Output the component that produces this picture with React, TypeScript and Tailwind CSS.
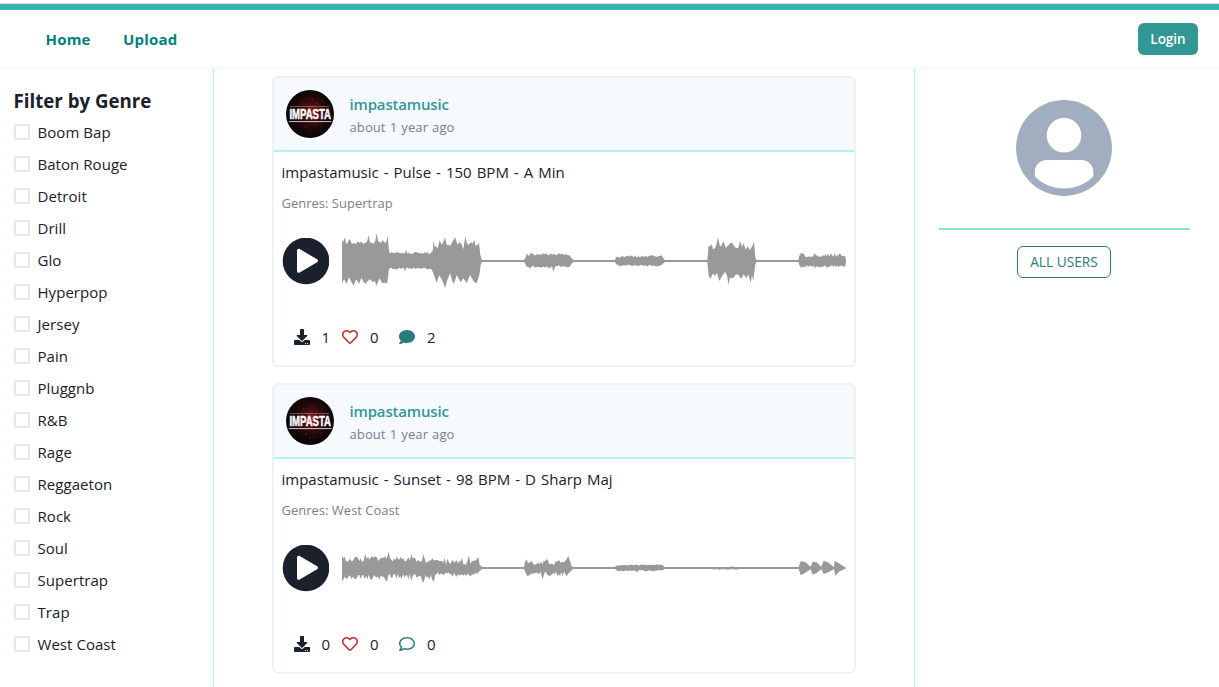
import React from "react";
import { FaDownload, FaRegHeart, FaComment, FaRegComment } from "react-icons/fa";

const genres = [
  "Boom Bap", "Baton Rouge", "Detroit", "Drill", "Glo", "Hyperpop", "Jersey", "Pain", "Pluggnb",
  "R&B", "Rage", "Reggaeton", "Rock", "Soul", "Supertrap", "Trap", "West Coast",
];

type Point = [number, number];

// Deterministic jitter for the quiet, evenly noisy stretches of a track.
function noise(from: number, to: number, level: number, spread: number, seed: number): Point[] {
  const out: Point[] = [];
  let s = seed;
  for (let x = from; x <= to; x += 4) {
    s = (s * 16807) % 2147483647;
    const r = (s % 1000) / 1000;
    out.push([x, level + (r - 0.5) * 2 * spread]);
  }
  return out;
}

const flat = (from: number, to: number): Point[] => [[from, 3], [to, 3]];

const pulseTop: Point[] = [
  [0, 58], [4, 60], [9, 71], [12, 52], [16, 54], [22, 65], [25, 62], [30, 51], [37, 54], [42, 50], [47, 59], [52, 55], [58, 58], [63, 52],
  [69, 53], [75, 58], [80, 78], [84, 54], [88, 56], [93, 52], [99, 57], [104, 83], [108, 60], [113, 57], [118, 55], [122, 63], [128, 55],
  [133, 57], [137, 75], [141, 30], ...noise(144, 188, 24, 3, 41), [192, 33], ...noise(196, 268, 24, 3, 77),
  [272, 30], [275, 62], [278, 43], [282, 44], [287, 38], [293, 63], [299, 48], [304, 57], [309, 71], [314, 48], [319, 49], [324, 45], [328, 52],
  [334, 62], [339, 71], [343, 60], [347, 48], [352, 57], [358, 52], [364, 35], [370, 75], [374, 54], [380, 48], [387, 57], [391, 52],
  [397, 63], [401, 45], [406, 48], [411, 55], [415, 18], ...flat(420, 546), [550, 8], [554, 23], ...noise(558, 684, 20, 4, 15), [690, 7],
  ...flat(694, 819), [822, 12], ...noise(826, 960, 14, 4, 92), [966, 5], ...flat(970, 1096),
  [1100, 47], [1104, 43], [1109, 51], [1113, 35], [1117, 37], [1122, 44], [1128, 71], [1134, 43], [1139, 47], [1144, 60], [1151, 40],
  [1158, 46], [1165, 55], [1171, 53], [1177, 44], [1183, 38], [1189, 40], [1194, 60], [1200, 43], [1205, 53], [1211, 34], [1217, 44],
  [1223, 32], [1230, 43], [1236, 58], [1240, 10], ...flat(1244, 1369), [1372, 16], [1378, 25], ...noise(1382, 1500, 18, 6, 27), [1509, 14], [1512, 3],
];
const pulseBottom: Point[] = [
  [0, 67], [6, 55], [14, 69], [21, 49], [27, 61], [35, 74], [42, 55], [51, 68], [58, 51], [66, 65], [72, 68], [77, 60], [84, 55], [92, 63],
  [98, 60], [104, 74], [112, 52], [121, 67], [129, 65], [136, 67], [141, 22], ...noise(144, 184, 22, 3, 18), [188, 31], ...noise(192, 268, 22, 3, 85),
  [274, 37], [284, 65], [292, 42], [304, 65], [309, 82], [316, 57], [324, 37], [334, 69], [339, 60], [344, 42], [356, 64], [364, 52],
  [374, 67], [384, 42], [396, 62], [404, 67], [412, 42], [416, 12], ...flat(420, 546), [550, 8], [554, 18], ...noise(558, 630, 18, 4, 71),
  [634, 34], ...noise(638, 684, 18, 5, 22), [690, 7], ...flat(694, 819), [822, 9], ...noise(826, 960, 14, 3, 62), [966, 5], ...flat(970, 1096),
  [1100, 45], [1106, 53], [1112, 38], [1119, 44], [1125, 36], [1132, 60], [1140, 46], [1149, 32], [1155, 42], [1159, 71], [1164, 50],
  [1173, 52], [1182, 40], [1191, 43], [1197, 54], [1205, 40], [1213, 52], [1219, 40], [1226, 65], [1230, 43], [1234, 60], [1240, 10],
  ...flat(1244, 1369), [1372, 12], [1377, 20], ...noise(1382, 1500, 16, 4, 33), [1509, 18], [1512, 3],
];

const sunsetTop: Point[] = [
  [0, 38], ...noise(4, 66, 27, 8, 54), [70, 43], ...noise(74, 134, 28, 8, 34), [140, 49], ...noise(144, 204, 27, 8, 12), [208, 43],
  ...noise(212, 240, 26, 8, 38), [244, 42], ...noise(248, 308, 23, 9, 48), [312, 9], [316, 28], ...noise(320, 376, 20, 12, 96), [381, 38],
  ...noise(385, 404, 20, 8, 67), [409, 33], [413, 10], ...flat(420, 546), [549, 18], [553, 26], ...noise(557, 668, 18, 9, 29),
  [674, 26], [679, 37], [685, 18], [690, 4], ...flat(694, 819), [824, 8], ...noise(828, 962, 9, 2, 31), [967, 4],
  ...flat(972, 1160), [1163, 3], [1170, 5], [1175, 3], ...flat(1190, 1370),
  [1376, 20], [1390, 18], [1406, 4], [1412, 19], [1424, 17], [1438, 4], [1445, 22], [1456, 18], [1476, 3], [1478, 22], [1490, 14], [1512, 1],
];
const sunsetBottom: Point[] = [
  [0, 38], ...noise(4, 128, 28, 9, 73), [135, 41], ...noise(139, 204, 26, 9, 61), [208, 39], ...noise(212, 236, 26, 8, 24),
  [243, 46], ...noise(247, 272, 28, 8, 52), [276, 41], ...noise(280, 407, 19, 8, 39), [414, 8], ...flat(420, 546),
  [551, 14], ...noise(555, 598, 18, 7, 47), [602, 34], ...noise(606, 668, 18, 8, 28), [674, 25], [680, 16], [690, 6],
  ...flat(694, 819), [824, 7], ...noise(828, 882, 8, 2, 17), [886, 13], ...noise(890, 962, 8, 2, 66), [967, 4],
  ...flat(972, 1112), [1116, 5], [1122, 3], [1134, 5], [1140, 3], [1160, 5], [1166, 3], [1184, 5], [1190, 3], [1370, 3],
  [1376, 21], [1384, 18], [1406, 4], [1412, 20], [1424, 15], [1438, 4], [1445, 18], [1456, 14], [1476, 3], [1480, 23], [1490, 12], [1512, 1],
];

function Waveform({ top, bottom }: { top: Point[]; bottom: Point[] }) {
  const upper = top.map(([x, h]) => `${x},${123 - h}`);
  const lower = bottom.map(([x, h]) => `${x},${123 + h}`).reverse();
  return (
    <svg className="ml-[13px] h-20 w-[504px] shrink-0" viewBox="0 3 1512 240" fill="#999999">
      <polygon points={[...upper, ...lower].join(" ")} />
      <rect y="120" width="1510" height="6" shapeRendering="crispEdges" />
    </svg>
  );
}

function TrackAvatar({ id }: { id: string }) {
  return (
    <svg className="size-12 shrink-0 overflow-visible" viewBox="0 0 48 48">
      <defs>
        <radialGradient id={id} cx="0.53" cy="0.46" r="0.5">
          <stop offset="0" stopColor="#a92a2a" />
          <stop offset="0.3" stopColor="#4e0f12" />
          <stop offset="0.65" stopColor="#1e080a" />
          <stop offset="1" stopColor="#0a0506" />
        </radialGradient>
      </defs>
      <circle cx="24" cy="24" r="24" fill={`url(#${id})`} />
      <g fill="#b23b36" opacity="0.7">
        <circle cx="26" cy="9" r=".7" /><circle cx="31" cy="13" r=".6" /><circle cx="17" cy="12" r=".6" />
        <circle cx="20" cy="37" r=".7" /><circle cx="29" cy="35" r=".6" /><circle cx="35" cy="36" r=".6" />
        <circle cx="13" cy="35" r=".6" /><circle cx="24" cy="41" r=".5" /><circle cx="37" cy="11" r=".5" />
      </g>
      <path d="M4 16.5H43" stroke="#a98583" strokeWidth=".6" />
      <path d="M3 31.6H45.500" stroke="#fff" strokeWidth=".8" />
      <text x="3.4" y="29" textLength="41.6" lengthAdjust="spacingAndGlyphs" fill="#fff" stroke="#fff" strokeWidth=".5" fontSize="13.8" fontWeight="700" fontFamily="'Liberation Sans', sans-serif">IMPASTA</text>
    </svg>
  );
}

interface Track {
  id: string;
  title: string;
  genre: string;
  top: Point[];
  bottom: Point[];
  downloads: number;
  likes: number;
  comments: number;
}

const tracks: Track[] = [
  { id: "pulse", title: "impastamusic - Pulse - 150 BPM - A Min", genre: "Supertrap", top: pulseTop, bottom: pulseBottom, downloads: 1, likes: 0, comments: 2 },
  { id: "sunset", title: "impastamusic - Sunset - 98 BPM - D Sharp Maj", genre: "West Coast", top: sunsetTop, bottom: sunsetBottom, downloads: 0, likes: 0, comments: 0 },
];

function TrackCard({ track }: { track: Track }) {
  return (
    <article className="h-[291px] w-[584px] shrink-0 overflow-hidden rounded-md border-2 border-[#edf2f7] bg-white">
      <header className="flex h-[74px] items-center border-b-2 border-[#b2f5ea] bg-[#f7fafc] pl-3">
        <TrackAvatar id={track.id} />
        <div className="ml-[15.5px] flex flex-col pt-px">
          <a className="text-[15px] leading-6 font-semibold tracking-[-0.16px] text-[#319795]">{track.title.split(" ")[0]}</a>
          <span className="text-[13px] leading-[22px] tracking-[0.1px] text-[#718096] [word-spacing:0.6px]">about 1 year ago</span>
        </div>
      </header>
      <div className="px-2 pt-2">
        <h3 className="-ml-[0.5px] text-[15px] leading-6 whitespace-nowrap [word-spacing:1.1px]">{track.title}</h3>
        <p className="mt-[9px] -ml-[0.5px] text-[13px] leading-[21px] text-[#808080]">Genres: {track.genre}</p>
        <div className="mt-[7px] flex h-20 items-center">
          <svg className="size-[47px] shrink-0" viewBox="0 0 47 47">
            <circle cx="24" cy="23" r="23.3" fill="#1a202c" />
            <path d="M15 12.7c0-1.6 1.4-2.3 2.7-1.6l17.4 10.2c1.3.8 1.3 2.2 0 3L17.7 34.5c-1.3.8-2.7 0-2.7-1.5z" fill="#fff" />
          </svg>
          <Waveform top={track.top} bottom={track.bottom} />
        </div>
        <div className="mt-6 flex h-6 items-center pl-3 text-[15px]">
          <FaDownload className="size-4" />
          <span className="ml-[11.5px] w-[20.5px]">{track.downloads}</span>
          <FaRegHeart className="size-4 text-[#c53030]" />
          <span className="ml-3 w-[29px]">{track.likes}</span>
          {track.comments > 0 ? <FaComment className="size-4 text-[#2c7a7b]" /> : <FaRegComment className="size-4 text-[#2c7a7b]" />}
          <span className="ml-3">{track.comments}</span>
        </div>
      </div>
    </article>
  );
}

export default function App() {
  return (
    <div className="flex h-[687px] w-[1219px] flex-col overflow-hidden bg-white font-['Open_Sans',sans-serif] text-[#1a202c]">
      <div className="h-1 shrink-0 border-b border-[#dcdcdc]" />
      <div className="h-1.5 shrink-0 bg-[#38b2ac]" />
      <nav className="flex h-[59px] shrink-0 items-center border-b border-[#f4f5f5] pr-[21px] pl-[45.5px]">
        <a className="w-[77.5px] text-[15px] leading-6 font-bold tracking-[0.2px] text-[#008080]">Home</a>
        <a className="text-[15px] leading-6 font-bold tracking-[0.2px] text-[#008080]">Upload</a>
        <button className="ml-auto h-8 w-[60px] rounded-md bg-[#319795] pt-px text-[13.5px] font-semibold text-white">Login</button>
      </nav>
      <div className="flex min-h-0 flex-1">
        <aside className="w-[214px] shrink-0 border-r border-[#b2f5ea] pt-5 pl-3.5">
          <h2 className="-ml-[0.5px] text-[18.7px] leading-6 font-bold whitespace-nowrap">Filter by Genre</h2>
          <ul className="mt-[7px] flex flex-col gap-2">
            {genres.map((genre) => (
              <li key={genre} className="flex h-6 items-center gap-[7.5px] text-[15px] leading-6 tracking-[0.05px]">
                <span className="size-4 rounded-[2px] border-2 border-[#e2e8f0]" />
                {genre}
              </li>
            ))}
          </ul>
        </aside>
        <main className="flex flex-1 flex-col items-center gap-4 overflow-hidden pt-[7px]">
          {tracks.map((track) => <TrackCard key={track.id} track={track} />)}
        </main>
        <aside className="flex w-[305px] shrink-0 flex-col items-center border-l border-[#b2f5ea] pt-[31px] pr-[29px] pl-6">
          <svg className="mr-px size-24" viewBox="0 0 96 96">
            <circle cx="48" cy="48" r="48" fill="#a0aec0" />
            <circle cx="48" cy="35.3" r="17.3" fill="#fff" />
            <path d="M18.8 76.5V72c0-7 5-12 12-12h34.500c7 0 12 5 12 12v4.500C69 84.500 59 88.500 48 88.500S27 84.500 18.800 76.500z" fill="#fff" />
          </svg>
          <hr className="mt-8 w-full border-t-2 border-[#81e6d9]" />
          <button className="mt-4 mr-px h-8 w-[94px] rounded-md border border-[#2c7a7b] text-[13.7px] font-medium text-[#2c7a7b]">ALL USERS</button>
        </aside>
      </div>
    </div>
  );
}
